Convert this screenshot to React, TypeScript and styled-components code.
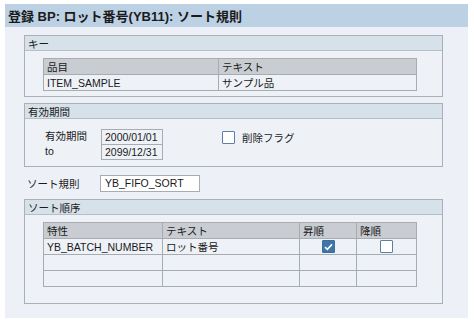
import React from "react";
import styled, { createGlobalStyle } from "styled-components";

const GlobalStyle = createGlobalStyle`
  body {
    margin: 0;
    background: #ffffff;
    font-family: "Liberation Sans", "Noto Sans CJK JP", sans-serif;
    color: #1a1a1a;
  }
`;

const Page = styled.div`
  padding: 4px 6px 6px 5px;
`;

const TitleBar = styled.div`
  height: 23px;
  display: flex;
  align-items: center;
  padding-left: 3px;
  background: #bdd1e4;
  font-size: 13px;
  font-weight: 700;
  color: #1a1a1a;
`;

const Body = styled.div`
  background: #edf1f7;
  padding: 8px 25px 14px 19px;
  display: flex;
  flex-direction: column;
`;

const Section = styled.div<{ $pad: string }>`
  border: 1px solid #a9b0b8;
  background: #eef2f7;
  display: flex;
  flex-direction: column;
  & > div:last-child {
    padding: ${(p) => p.$pad};
  }
`;

const SectionHeader = styled.div`
  height: 14px;
  display: flex;
  align-items: center;
  padding-left: 3px;
  background: #d6e1ea;
  border-bottom: 1px solid #b6bec6;
  font-size: 10.5px;
`;

const SectionBody = styled.div``;

const Grid = styled.table`
  border-collapse: collapse;
  width: 100%;
  font-size: 10.5px;
  table-layout: fixed;
  th,
  td {
    border: 1px solid #a6acb3;
    height: 15px;
    padding: 0 3px;
    text-align: left;
    font-weight: 400;
    white-space: nowrap;
  }
  th {
    background: #c9cdd2;
  }
  td {
    background: #eef2f7;
  }
`;

const Center = styled.td`
  && {
    text-align: center;
    padding: 0;
  }
`;

const Spacer = styled.div<{ $h: number }>`
  height: ${(p) => p.$h}px;
`;

const ValidityRow = styled.div`
  display: flex;
  align-items: flex-start;
`;

const Labels = styled.div`
  width: 56px;
  display: flex;
  flex-direction: column;
  font-size: 10.5px;
  & > span {
    height: 15px;
    line-height: 15px;
  }
`;

const DateBox = styled.div`
  width: 60px;
  border: 1px solid #a6acb3;
  font-size: 10.5px;
  & > div {
    height: 14px;
    line-height: 14px;
    padding-left: 3px;
    background: #eef2f7;
  }
  & > div + div {
    border-top: 1px solid #a6acb3;
  }
`;

const FlagField = styled.label`
  margin-left: 59px;
  margin-top: 1px;
  display: flex;
  align-items: center;
  gap: 7px;
  font-size: 10.5px;
`;

const Box = styled.span<{ $checked?: boolean }>`
  display: inline-flex;
  align-items: center;
  justify-content: center;
  width: 11px;
  height: 11px;
  border: 1px solid ${(p) => (p.$checked ? "#3c6d9c" : "#5b7ea5")};
  border-radius: 1px;
  background: ${(p) => (p.$checked ? "#3f76aa" : "#ffffff")};
  vertical-align: middle;
`;

const FieldRow = styled.div`
  display: flex;
  align-items: center;
  padding: 8px 0 7px 3px;
  font-size: 10.5px;
`;

const FieldLabel = styled.span`
  width: 73px;
`;

const TextInput = styled.div`
  width: 94px;
  height: 15px;
  line-height: 15px;
  padding-left: 4px;
  border: 1px solid #a6acb3;
  background: #ffffff;
`;

const Check = ({ checked }: { checked?: boolean }) => (
  <Box $checked={checked}>
    {checked && (
      <svg width="9" height="8" viewBox="0 0 9 8">
        <path d="M1 4.2 L3.4 6.4 L8 1.4" stroke="#fff" strokeWidth="1.6" fill="none" />
      </svg>
    )}
  </Box>
);

export default function App() {
  return (
    <Page>
      <GlobalStyle />
      <TitleBar>登録 BP: ロット番号(YB11): ソート規則</TitleBar>
      <Body>
        <Section $pad="7px 25px 5px 18px">
          <SectionHeader>キー</SectionHeader>
          <SectionBody>
            <Grid>
              <colgroup>
                <col style={{ width: 175 }} />
                <col />
              </colgroup>
              <thead>
                <tr>
                  <th>品目</th>
                  <th>テキスト</th>
                </tr>
              </thead>
              <tbody>
                <tr>
                  <td>ITEM_SAMPLE</td>
                  <td>サンプル品</td>
                </tr>
              </tbody>
            </Grid>
          </SectionBody>
        </Section>
        <Spacer $h={6} />
        <Section $pad="10px 10px 6px 20px">
          <SectionHeader>有効期間</SectionHeader>
          <SectionBody>
            <ValidityRow>
              <Labels>
                <span>有効期間</span>
                <span>to</span>
              </Labels>
              <DateBox>
                <div>2000/01/01</div>
                <div>2099/12/31</div>
              </DateBox>
              <FlagField>
                <Check />
                削除フラグ
              </FlagField>
            </ValidityRow>
          </SectionBody>
        </Section>
        <FieldRow>
          <FieldLabel>ソート規則</FieldLabel>
          <TextInput>YB_FIFO_SORT</TextInput>
        </FieldRow>
        <Section $pad="7px 25px 16px 18px">
          <SectionHeader>ソート順序</SectionHeader>
          <SectionBody>
            <Grid>
              <colgroup>
                <col style={{ width: 119 }} />
                <col style={{ width: 137 }} />
                <col style={{ width: 57 }} />
                <col />
              </colgroup>
              <thead>
                <tr>
                  <th>特性</th>
                  <th>テキスト</th>
                  <th>昇順</th>
                  <th>降順</th>
                </tr>
              </thead>
              <tbody>
                <tr>
                  <td>YB_BATCH_NUMBER</td>
                  <td>ロット番号</td>
                  <Center>
                    <Check checked />
                  </Center>
                  <Center>
                    <Check />
                  </Center>
                </tr>
                <tr>
                  <td />
                  <td />
                  <td />
                  <td />
                </tr>
                <tr>
                  <td />
                  <td />
                  <td />
                  <td />
                </tr>
              </tbody>
            </Grid>
          </SectionBody>
        </Section>
      </Body>
    </Page>
  );
}
